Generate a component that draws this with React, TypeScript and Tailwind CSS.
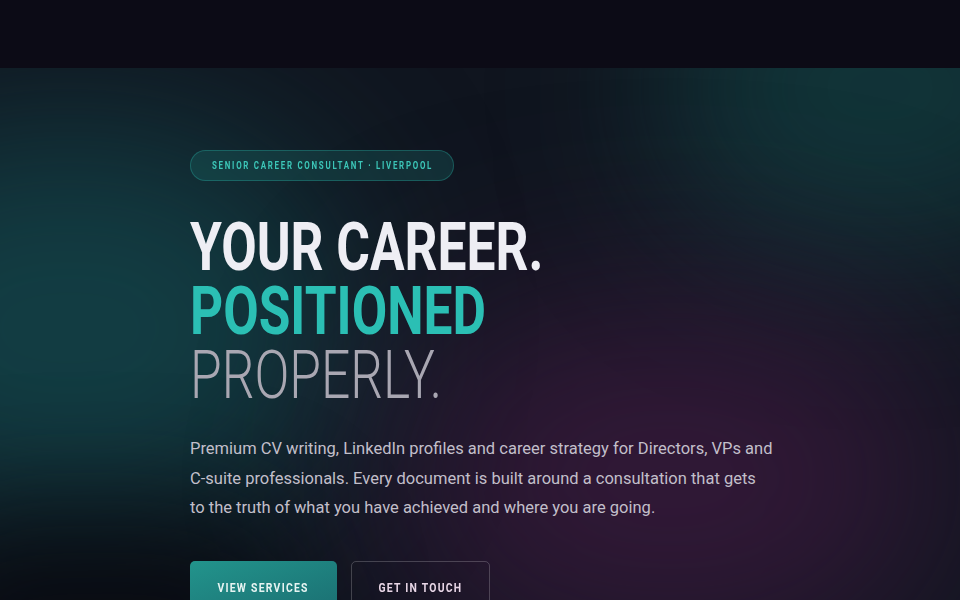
import React from 'react';

const App: React.FC = () => {
  return (
    <div className="min-h-screen bg-[#0b0a14] flex flex-col overflow-hidden font-['Roboto','Noto_Sans',sans-serif]">
      {/* Empty top bar */}
      <header className="h-[68px] bg-[#0c0b16] shrink-0"></header>

      <section className="relative flex-1 overflow-hidden bg-[#10151f]">
        {/* Ambient glows */}
        <div className="absolute left-[-200px] top-[60px] w-[540px] h-[400px] rounded-full bg-[#14595b]/60 blur-[90px] pointer-events-none"></div>
        <div className="absolute right-[-140px] top-[-140px] w-[440px] h-[320px] rounded-full bg-[#12494a]/60 blur-[80px] pointer-events-none"></div>
        <div className="absolute left-[400px] top-[240px] w-[540px] h-[340px] rounded-full bg-[#4a1a48]/60 blur-[100px] pointer-events-none"></div>
        <div className="absolute left-[-100px] bottom-[-120px] w-[400px] h-[220px] rounded-full bg-[#08080e]/80 blur-[60px] pointer-events-none"></div>

        <div className="relative z-10 pl-[190px] pt-[82px]">
          <div className="flex items-center w-[264px] h-[31px] pl-[12px] rounded-full border border-[#2bbfb4]/30 bg-[#1b6e6a]/30">
            <span className="w-[5px] h-[5px] rounded-full bg-[#2bbfb4]/80"></span>
            <span className="ml-[9px] inline-block origin-left scale-x-[0.79] whitespace-nowrap text-[10px] font-bold tracking-[0.22em] text-[#3cc6b8]">
              SENIOR CAREER CONSULTANT · LIVERPOOL
            </span>
          </div>

          <h1 className="mt-[35px] text-[66px] leading-[64px] uppercase">
            <span className="block origin-left scale-x-[0.78] whitespace-nowrap font-bold text-[#eeeef4]">Your Career.</span>
            <span className="block origin-left scale-x-[0.78] whitespace-nowrap font-bold text-[#2bbfb4]">Positioned</span>
            <span className="block origin-left scale-x-[0.78] whitespace-nowrap font-light text-[#a9a7b2]">Properly.</span>
          </h1>

          <p className="mt-[26px] text-[16.5px] leading-[29.5px] text-[#c2bfca] whitespace-nowrap">
            Premium CV writing, LinkedIn profiles and career strategy for Directors, VPs and<br />
            C-suite professionals. Every document is built around a consultation that gets<br />
            to the truth of what you have achieved and where you are going.
          </p>

          <div className="mt-[38px] flex gap-[14px]">
            <button className="w-[147px] h-[52px] rounded-[5px] bg-gradient-to-br from-[#22948c] to-[#1b6f72]">
              <span className="inline-block scale-x-[0.8] whitespace-nowrap text-[13px] font-bold tracking-[0.12em] text-[#e6f4f2]">VIEW SERVICES</span>
            </button>
            <button className="w-[139px] h-[52px] rounded-[5px] border border-white/20">
              <span className="inline-block scale-x-[0.8] whitespace-nowrap text-[13px] font-bold tracking-[0.12em] text-[#e8d6e6]">GET IN TOUCH</span>
            </button>
          </div>
        </div>
      </section>
    </div>
  );
};

export default App;
